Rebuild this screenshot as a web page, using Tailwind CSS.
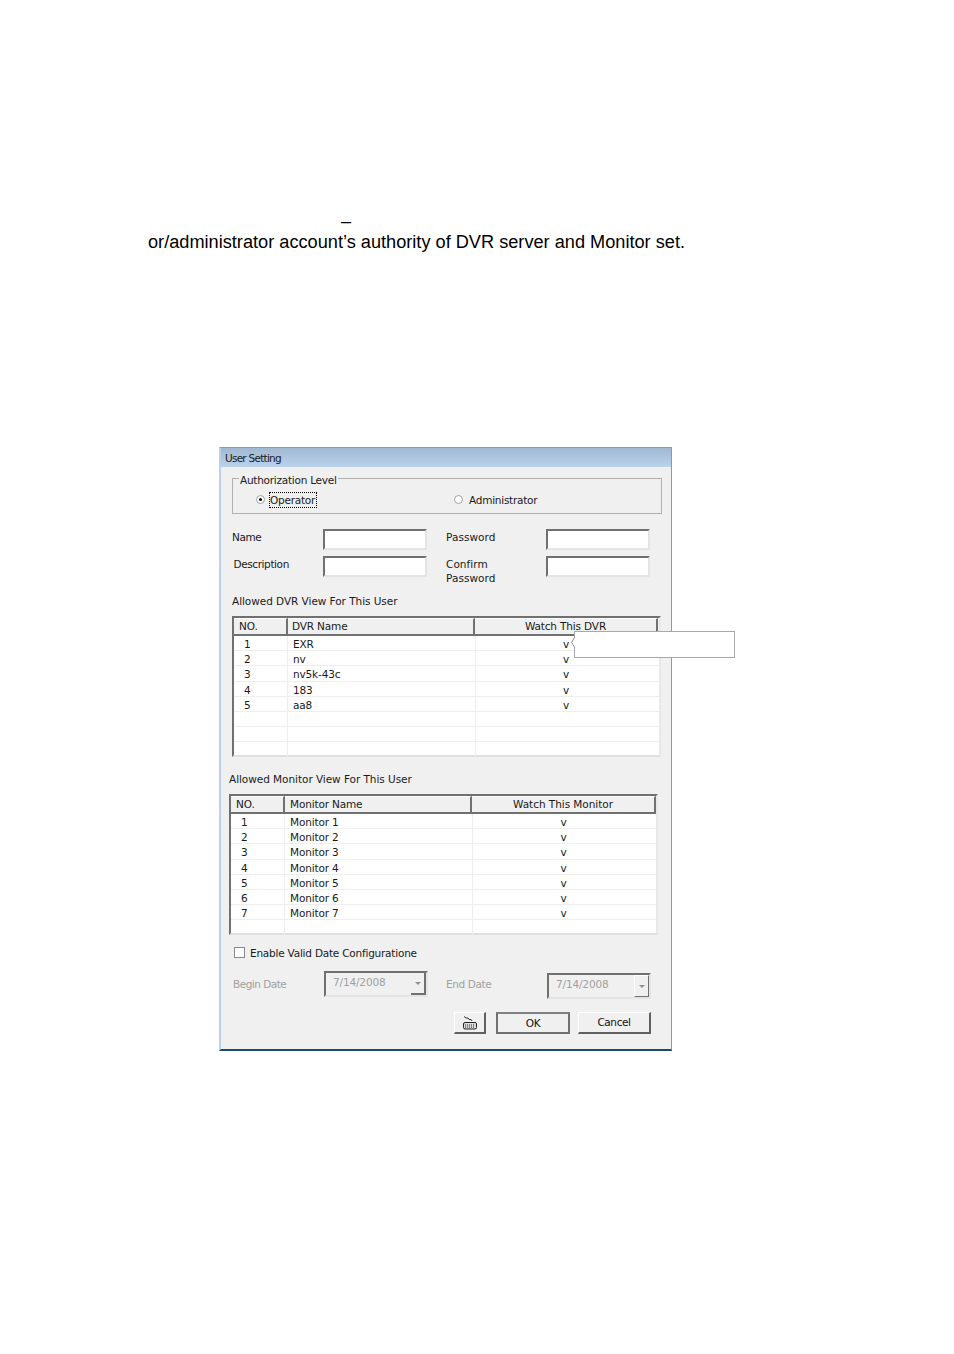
<!DOCTYPE html>
<html><head><meta charset="utf-8"><script src="https://cdn.jsdelivr.net/npm/@tailwindcss/browser@4"></script></head>
<body class="bg-white">
<div class="relative w-[954px] h-[1354px] overflow-hidden bg-white text-black font-['DejaVu_Sans',sans-serif]">
  <div class="pt-[211px] pl-[148px] font-['Liberation_Sans',sans-serif] text-[18.18px] leading-[21px] h-[447px]">
    <div class="pl-[193px]">–</div>
    <div>or/administrator account’s authority of DVR server and Monitor set.</div>
  </div>

  <div class="relative ml-[219px] w-[453px] h-[604px] bg-[#f0f0f0] border-l-2 border-r border-b-2 border-t border-l-[#b9d1ea] border-r-[#7f9db9] border-b-[#1c4a6e] border-t-[#8a9bac] text-[10.5px] leading-[13px] text-[#1a1a1a] tracking-[-0.15px]">
    <div class="h-[19px] bg-gradient-to-b from-[#a0b8d2] to-[#bad2ea] pl-[4px] pt-[4px] tracking-[-0.75px]">User Setting</div>

    <!-- group -->
    <div class="relative ml-[11px] mt-[11px] w-[430px] h-[36px] border border-[#b0b0b0]">
      <div class="absolute left-[6px] -top-[5px] bg-[#f0f0f0] px-[1px] tracking-[-0.25px]">Authorization Level</div>
      <div class="flex items-center h-full pt-[8px] pl-[23px]">
        <span class="mb-[2px] w-[9px] h-[9px] rounded-full border border-[#a0a0a0] bg-white flex items-center justify-center"><span class="w-[3px] h-[3px] rounded-full bg-black"></span></span>
        <span class="ml-[4px] border border-dotted border-black leading-[14px] w-[48px] tracking-[-0.25px]">Operator</span>
        <span class="mb-[2px] ml-[137px] w-[9px] h-[9px] rounded-full border border-[#a0a0a0] bg-white"></span>
        <span class="ml-[6px] tracking-[-0.25px]">Administrator</span>
      </div>
    </div>

    <!-- fields -->
    <div class="grid grid-cols-[91px_104px_19px_100px_104px] grid-rows-[21px_21px] gap-y-[6px] ml-[11px] mt-[15px]">
      <div class="pt-[2px] tracking-[-0.4px]">Name</div>
      <div class="bg-white border-2 border-t-[#707070] border-l-[#707070] border-r-[#e4e4e4] border-b-[#e4e4e4]"></div>
      <div></div>
      <div class="pt-[2px] tracking-[0.05px]">Password</div>
      <div class="bg-white border-2 border-t-[#707070] border-l-[#707070] border-r-[#e4e4e4] border-b-[#e4e4e4]"></div>
      <div class="pl-[1.5px] pt-[2px] tracking-[-0.4px]">Description</div>
      <div class="bg-white border-2 border-t-[#707070] border-l-[#707070] border-r-[#e4e4e4] border-b-[#e4e4e4]"></div>
      <div></div>
      <div class="pt-[1px] leading-[14px] tracking-[0.05px]">Confirm<br>Password</div>
      <div class="bg-white border-2 border-t-[#707070] border-l-[#707070] border-r-[#e4e4e4] border-b-[#e4e4e4]"></div>
    </div>

    <div class="ml-[11px] mt-[18px] tracking-[-0.05px]">Allowed DVR View For This User</div>

    <!-- DVR table -->
    <div class="ml-[11px] mt-[8px] w-[429px] h-[141px] bg-white border-2 border-t-[#707070] border-l-[#707070] border-r-[#e8e8e8] border-b-[#e0e0e0]">
      <div class="grid grid-cols-[54px_187px_183px] h-[18px] bg-[#f0f0f0] border-b-2 border-b-[#707070] leading-[15px]">
        <div class="border-r-2 border-[#707070] pl-[5px] border-t border-t-white">NO.</div>
        <div class="border-r-2 border-[#707070] pl-[4px] border-t border-t-white">DVR Name</div>
        <div class="text-center border-r-2 border-[#707070] border-t border-t-white">Watch This DVR</div>
      </div>
      <div class="grid grid-cols-[54px_188px_1fr] auto-rows-[15.2px] leading-[16px]">
        <div class="border-r border-b border-[#eeeeee] pl-[10px]">1</div><div class="border-r border-b border-[#eeeeee] pl-[5px]">EXR</div><div class="border-b border-[#eeeeee] text-center pr-[3px]">v</div>
        <div class="border-r border-b border-[#eeeeee] pl-[10px]">2</div><div class="border-r border-b border-[#eeeeee] pl-[5px]">nv</div><div class="border-b border-[#eeeeee] text-center pr-[3px]">v</div>
        <div class="border-r border-b border-[#eeeeee] pl-[10px]">3</div><div class="border-r border-b border-[#eeeeee] pl-[5px]">nv5k-43c</div><div class="border-b border-[#eeeeee] text-center pr-[3px]">v</div>
        <div class="border-r border-b border-[#eeeeee] pl-[10px]">4</div><div class="border-r border-b border-[#eeeeee] pl-[5px]">183</div><div class="border-b border-[#eeeeee] text-center pr-[3px]">v</div>
        <div class="border-r border-b border-[#eeeeee] pl-[10px]">5</div><div class="border-r border-b border-[#eeeeee] pl-[5px]">aa8</div><div class="border-b border-[#eeeeee] text-center pr-[3px]">v</div>
        <div class="border-r border-b border-[#eeeeee]"></div><div class="border-r border-b border-[#eeeeee]"></div><div class="border-b border-[#eeeeee]"></div>
        <div class="border-r border-b border-[#eeeeee]"></div><div class="border-r border-b border-[#eeeeee]"></div><div class="border-b border-[#eeeeee]"></div>
        <div class="border-r border-[#eeeeee]"></div><div class="border-r border-[#eeeeee]"></div><div></div>
      </div>
    </div>

    <div class="ml-[8px] mt-[16px] tracking-[-0.05px]">Allowed Monitor View For This User</div>

    <!-- Monitor table -->
    <div class="ml-[8px] mt-[8px] w-[429px] h-[141px] bg-white border-2 border-t-[#707070] border-l-[#707070] border-r-[#e8e8e8] border-b-[#e0e0e0]">
      <div class="grid grid-cols-[54px_187px_184px] h-[18px] bg-[#f0f0f0] border-b-2 border-b-[#707070] leading-[15px]">
        <div class="border-r-2 border-[#707070] pl-[5px] border-t border-t-white">NO.</div>
        <div class="border-r-2 border-[#707070] pl-[5px] border-t border-t-white">Monitor Name</div>
        <div class="text-center border-r-2 border-[#707070] border-t border-t-white tracking-[-0.05px]">Watch This Monitor</div>
      </div>
      <div class="grid grid-cols-[54px_188px_1fr] auto-rows-[15.2px] leading-[16px]">
        <div class="border-r border-b border-[#eeeeee] pl-[10px]">1</div><div class="border-r border-b border-[#eeeeee] pl-[5px]">Monitor 1</div><div class="border-b border-[#eeeeee] text-center pr-[2px]">v</div>
        <div class="border-r border-b border-[#eeeeee] pl-[10px]">2</div><div class="border-r border-b border-[#eeeeee] pl-[5px]">Monitor 2</div><div class="border-b border-[#eeeeee] text-center pr-[2px]">v</div>
        <div class="border-r border-b border-[#eeeeee] pl-[10px]">3</div><div class="border-r border-b border-[#eeeeee] pl-[5px]">Monitor 3</div><div class="border-b border-[#eeeeee] text-center pr-[2px]">v</div>
        <div class="border-r border-b border-[#eeeeee] pl-[10px]">4</div><div class="border-r border-b border-[#eeeeee] pl-[5px]">Monitor 4</div><div class="border-b border-[#eeeeee] text-center pr-[2px]">v</div>
        <div class="border-r border-b border-[#eeeeee] pl-[10px]">5</div><div class="border-r border-b border-[#eeeeee] pl-[5px]">Monitor 5</div><div class="border-b border-[#eeeeee] text-center pr-[2px]">v</div>
        <div class="border-r border-b border-[#eeeeee] pl-[10px]">6</div><div class="border-r border-b border-[#eeeeee] pl-[5px]">Monitor 6</div><div class="border-b border-[#eeeeee] text-center pr-[2px]">v</div>
        <div class="border-r border-b border-[#eeeeee] pl-[10px]">7</div><div class="border-r border-b border-[#eeeeee] pl-[5px]">Monitor 7</div><div class="border-b border-[#eeeeee] text-center pr-[2px]">v</div>
        <div class="border-r border-[#eeeeee]"></div><div class="border-r border-[#eeeeee]"></div><div></div>
      </div>
    </div>

    <!-- enable -->
    <div class="flex items-center ml-[13px] mt-[12px] h-[13px]">
      <span class="w-[11px] h-[11px] mb-[2px] bg-white border border-[#8a8a8a]"></span>
      <span class="ml-[5px] tracking-[-0.22px]">Enable Valid Date Configuratione</span>
    </div>

    <!-- dates -->
    <div class="flex items-start ml-[12px] mt-[11px] h-[28px] text-[#a0a0a0]">
      <span class="w-[91px] pt-[7px] tracking-[-0.5px]">Begin Date</span>
      <div class="w-[104px] h-[26px] flex border-2 border-t-[#707070] border-l-[#707070] border-r-[#e4e4e4] border-b-[#e4e4e4] pl-[7px] pt-[3px]">7/14/2008
        <span class="ml-auto mr-0 mt-[-3px] w-[15px] h-[22px] border-r-2 border-b-2 border-[#707070] flex items-center justify-center"><span class="border-x-[3px] border-t-[3px] border-x-transparent border-t-[#909090]"></span></span>
      </div>
      <span class="ml-[18px] w-[101px] pt-[7px] tracking-[-0.4px]">End Date</span>
      <div class="w-[104px] h-[26px] mt-[2px] flex border-2 border-t-[#707070] border-l-[#707070] border-r-[#e4e4e4] border-b-[#e4e4e4] pl-[7px] pt-[3px]">7/14/2008
        <span class="ml-auto mt-[-3px] w-[15px] h-[22px] border border-l-white border-t-white border-r-[#707070] border-b-[#707070] bg-[#f0f0f0] flex items-center justify-center"><span class="border-x-[3px] border-t-[3px] border-x-transparent border-t-[#909090]"></span></span>
      </div>
    </div>

    <!-- buttons -->
    <div class="flex justify-end gap-[8px] mr-[20px] mt-[13px] h-[22px] text-[#111]">
      <button class="w-[32px] mr-[2px] flex items-center justify-center border border-l-white border-t-white border-r-[#606060] border-b-[#606060] border-r-2 border-b-2 bg-[#f0f0f0]">
        <svg width="16" height="15" viewBox="0 0 16 15"><path d="M2 1.500l2 1.500h2l1 1.500h2l1 1.500" fill="none" stroke="#333"/><rect x="1.500" y="7.500" width="13" height="6.500" rx="1.500" fill="#dddddd" stroke="#222"/><path d="M3 10h10M3 12h10" stroke="#222" stroke-dasharray="1 1"/></svg>
      </button>
      <button class="w-[74px] border-2 border-[#707070] border-t-[#808080] bg-[#f0f0f0] leading-[16px] pb-[1px] tracking-[-0.3px]">OK</button>
      <button class="w-[73px] border border-l-white border-t-white border-r-[#606060] border-b-[#606060] border-b-2 border-r-2 bg-[#f0f0f0] tracking-[-0.4px]">Cancel</button>
    </div>

    <!-- callout -->
    <div class="absolute left-[353px] top-[183px] w-[161px] h-[27px] bg-white border border-[#a8a8a8]">
      <svg class="absolute -left-[4px] top-[4px]" width="4" height="13" viewBox="0 0 4 13"><path d="M4 0.500 0.700 6.500 4 12" fill="white" stroke="#909090"/></svg>
    </div>
  </div>
</div>
</body></html>
